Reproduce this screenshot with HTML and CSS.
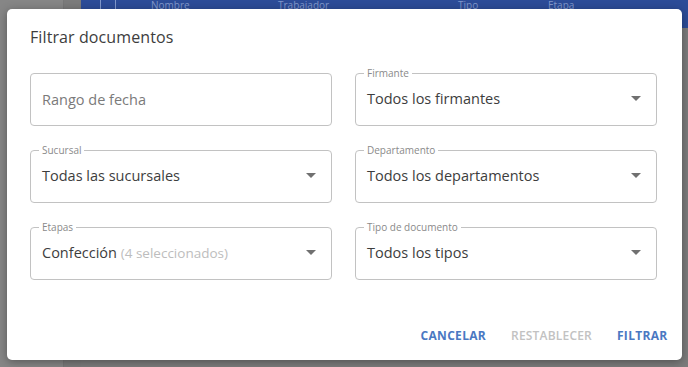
FILE: index.html
```html
<!DOCTYPE html>
<html lang="es">
<head>
<meta charset="utf-8">
<title>Filtrar documentos</title>
<link rel="stylesheet" href="styles.css">
</head>
<body>
<div class="backdrop">
  <div class="side"></div>
  <div class="side2"></div>
  <div class="main">
    <div class="thead">
      <span class="chk"></span>
      <span class="th th-nombre">Nombre</span>
      <span class="th th-trab">Trabajador</span>
      <span class="th th-tipo">Tipo</span>
      <span class="th th-etapa">Etapa</span>
    </div>
  </div>
</div>

<div class="dialog">
  <h2 class="title">Filtrar documentos</h2>
  <div class="grid">
    <div class="field">
      <span class="placeholder">Rango de fecha</span>
    </div>
    <div class="field">
      <span class="label">Firmante</span>
      <span class="value">Todos los firmantes</span>
      <span class="arrow"></span>
    </div>
    <div class="field">
      <span class="label">Sucursal</span>
      <span class="value">Todas las sucursales</span>
      <span class="arrow"></span>
    </div>
    <div class="field">
      <span class="label">Departamento</span>
      <span class="value">Todos los departamentos</span>
      <span class="arrow"></span>
    </div>
    <div class="field">
      <span class="label">Etapas</span>
      <span class="value">Confección <span class="muted">(4 seleccionados)</span></span>
      <span class="arrow"></span>
    </div>
    <div class="field">
      <span class="label">Tipo de documento</span>
      <span class="value">Todos los tipos</span>
      <span class="arrow"></span>
    </div>
  </div>
  <div class="actions">
    <button class="btn">CANCELAR</button>
    <button class="btn btn-disabled">RESTABLECER</button>
    <button class="btn">FILTRAR</button>
  </div>
</div>
</body>
</html>
```

FILE: styles.css
```css
* { box-sizing: border-box; }
html, body {
  margin: 0;
  width: 688px;
  height: 367px;
  overflow: hidden;
}
body {
  background: #7c7c7c;
  font-family: "Open Sans", "Noto Sans", sans-serif;
  position: relative;
}
.backdrop {
  display: flex;
  height: 367px;
}
.side {
  width: 63px;
  background: #868686;
}
.side2 {
  width: 18px;
  background: #7b7b7b;
  border-left: 1px solid #777;
}
.main {
  flex: 1;
}
.thead {
  height: 28px;
  background: #2c4c98;
  position: relative;
  color: #8198cb;
  font-size: 10px;
  line-height: 10px;
}
.chk {
  position: absolute;
  left: 19px;
  top: 0;
  width: 16px;
  height: 14px;
  border: 1px solid #8198cb;
  border-top: none;
}
.th {
  position: absolute;
  top: 0;
}
.th-nombre { left: 70px; }
.th-trab { left: 197px; }
.th-tipo { left: 377px; }
.th-etapa { left: 467px; }

.dialog {
  position: absolute;
  left: 7px;
  top: 9px;
  width: 675px;
  height: 351px;
  background: #fff;
  border-radius: 5px;
  box-shadow: 0 2px 10px rgba(0,0,0,0.35);
  padding: 0 25px 0 23px;
  display: flex;
  flex-direction: column;
}
.title {
  margin: 0;
  padding-top: 17px;
  height: 64px;
  font-size: 16px;
  font-weight: 400;
  color: #3d3d3d;
  letter-spacing: 0.1px;
}
.grid {
  display: grid;
  grid-template-columns: 302px 302px;
  column-gap: 23px;
  row-gap: 24px;
  grid-auto-rows: 53px;
}
.field {
  position: relative;
  border: 1px solid #c2c2c2;
  border-radius: 4px;
  display: flex;
  align-items: center;
  padding: 0 15px 0 11px;
}
.label {
  position: absolute;
  left: 8px;
  top: -8px;
  background: #fff;
  padding: 0 3px;
  font-size: 10px;
  line-height: 14px;
  color: #8a8a8a;
}
.placeholder {
  font-size: 14.5px;
  color: #7a7a7a;
  padding-bottom: 1px;
}
.value {
  flex: 1;
  font-size: 14.5px;
  color: #3d3d3d;
  padding-bottom: 3px;
}
.muted {
  color: #bdbdbd;
  font-size: 13.5px;
}
.arrow {
  width: 0;
  height: 0;
  border-left: 5px solid transparent;
  border-right: 5px solid transparent;
  border-top: 5px solid #707070;
  margin-bottom: 2px;
}
.actions {
  margin-top: auto;
  height: 50px;
  display: flex;
  justify-content: flex-end;
  align-items: center;
  margin-right: -23px;
}
.btn {
  background: none;
  border: none;
  font-family: inherit;
  font-size: 12px;
  font-weight: 700;
  letter-spacing: 0.3px;
  color: #4a78c2;
  padding: 6px 12.5px;
}
.btn-disabled {
  color: #c2c2c2;
  font-weight: 600;
  letter-spacing: 0.2px;
}
```
